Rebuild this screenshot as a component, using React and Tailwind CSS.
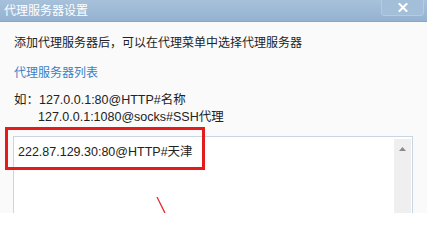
import React from "react";

const ProxyDialog = () => {
  return (
    <div
      className="relative w-[427px] h-[213px] overflow-hidden bg-[#fafafa] text-[#222]"
      style={{ fontFamily: '"Liberation Sans", "Noto Sans CJK SC", sans-serif' }}
    >
      {/* Title bar */}
      <div className="relative h-[22px] flex items-center pl-[4px] bg-gradient-to-b from-[#a7c1db] to-[#94b2d0] border-b border-[#8aa8c6]">
        <span className="text-[12px] leading-none text-white">代理服务器设置</span>
        <div className="absolute right-[3px] top-[-2px] w-[43px] h-[18px] rounded-b-[3px] border border-[#b7cbe0] bg-[#a3bed9] flex items-center justify-center">
          <svg width="10" height="9" viewBox="0 0 10 9">
            <path d="M1.5 1 L8.5 8 M8.5 1 L1.5 8" stroke="#fff" strokeWidth="2" strokeLinecap="square" />
          </svg>
        </div>
      </div>

      {/* Body */}
      <div className="flex flex-col pl-[14px] text-[12px]">
        <div className="mt-[12px] leading-[18px]">添加代理服务器后，可以在代理菜单中选择代理服务器</div>
        <div className="mt-[12px] leading-[18px] text-[#3c7fc4]">代理服务器列表</div>
        <div className="mt-[10px] leading-[17px] text-[12.5px]">如：127.0.0.1:80@HTTP#名称</div>
        <div className="leading-[17px] pl-[24px] text-[12.5px]">127.0.0.1:1080@socks#SSH代理</div>

        {/* Proxy list box */}
        <div className="mt-[10px] -ml-[1px] w-[400px] h-[100px] flex border border-[#c9d6e2] bg-white">
          <div className="flex-1 pl-[4px] pt-[6px] text-[12.5px] leading-[18px]">222.87.129.30:80@HTTP#天津</div>
          <div className="w-[17px] mt-[2px] mr-[1px] bg-[#efefef] flex justify-center pt-[8px]">
            <svg width="7" height="4" viewBox="0 0 7 4">
              <path d="M0 4 L3.5 0 L7 4 Z" fill="#8a8a8a" />
            </svg>
          </div>
        </div>
      </div>

      {/* Red highlight */}
      <div className="absolute left-[5px] top-[127px] w-[200px] h-[43px] border-[3px] border-[#e31b1b]" />
      <svg className="absolute left-[150px] top-[190px]" width="20" height="23" viewBox="0 0 20 23">
        <path d="M7 7 L15 23" stroke="#e0262a" strokeWidth="1.3" />
      </svg>
    </div>
  );
};

export default function App() {
  return <ProxyDialog />;
}
